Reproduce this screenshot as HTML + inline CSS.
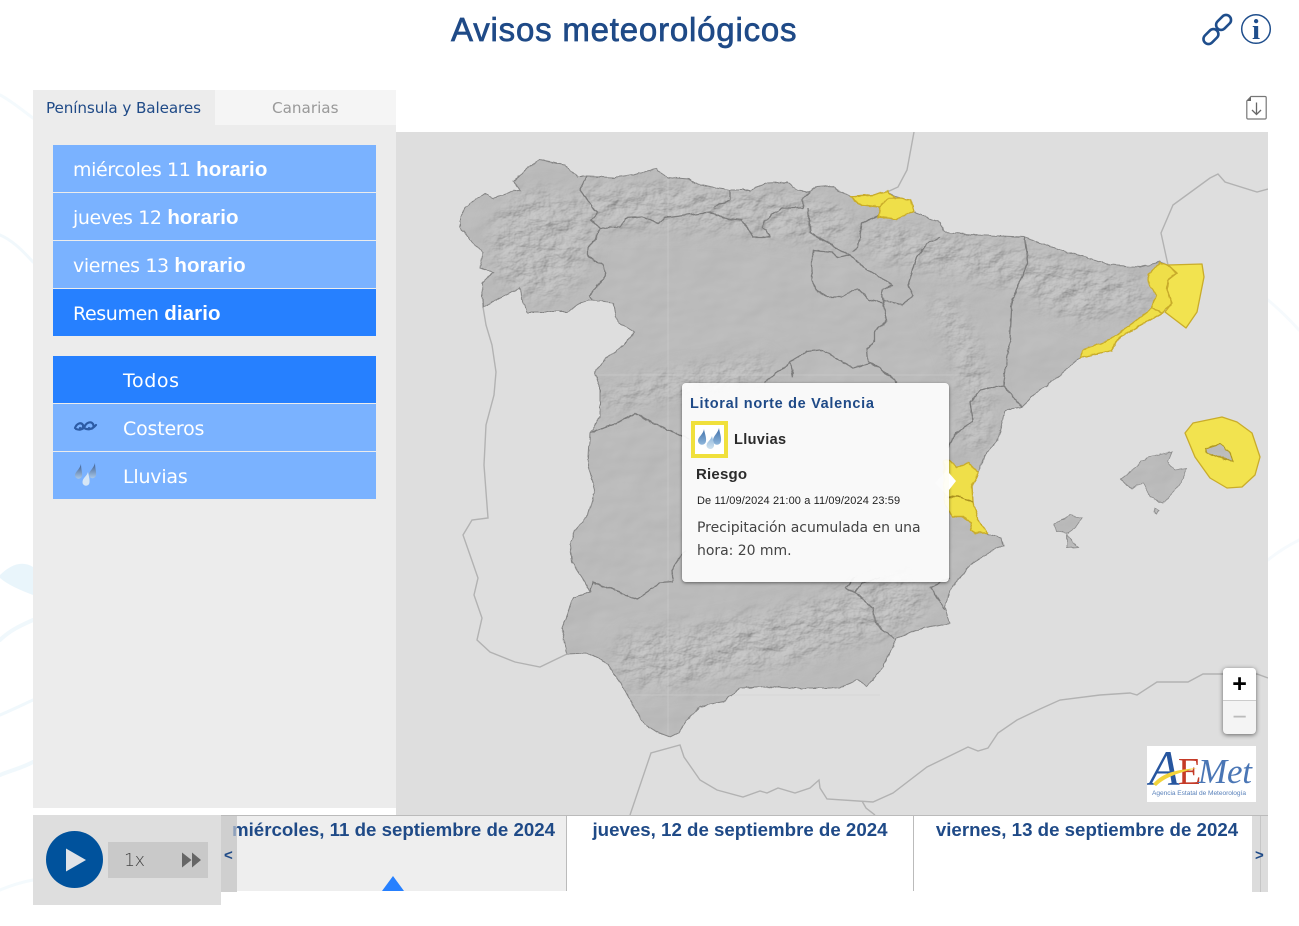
<!DOCTYPE html>
<html lang="es"><head><meta charset="utf-8"><title>Avisos meteorológicos</title>
<style>
html,body{margin:0;padding:0;width:1299px;height:926px;overflow:hidden;background:#fff}
body{position:relative;font-family:"DejaVu Sans","Liberation Sans",sans-serif;color:#333}
.a{position:absolute;white-space:nowrap}
.btn{position:absolute;left:53px;width:323px;height:47px;background:#7ab2ff;color:#fff;font-size:19px;line-height:47px;letter-spacing:-.38px}
.btn span{position:absolute;left:20px;top:1px;white-space:nowrap}
.btn b{font-family:"Liberation Sans",sans-serif;font-size:20.5px;letter-spacing:.1px}
.sel{background:#2680ff}
.t2 span{left:70px;top:2px;font-size:19px;letter-spacing:-.2px}
.day{position:absolute;top:816px;height:75px;font-family:"Liberation Sans",sans-serif;font-weight:bold;font-size:18.7px;color:#1f4a87;line-height:27px;text-align:center;white-space:nowrap;overflow:hidden}
</style></head><body>
<svg class="a" style="left:0;top:0;opacity:.55" width="1299" height="926" viewBox="0 0 1299 926" fill="none" stroke="#d6ebf7" stroke-linecap="round">
<path d="M0 235C12 240 22 250 33 262" stroke-width="3" opacity=".6"/>
<path d="M0 575C10 565 22 560 33 567L33 595C20 590 8 585 0 578Z" fill="#d8edf8" stroke="none"/>
<path d="M0 640C10 630 22 625 33 620" stroke-width="4" opacity=".7"/>
<path d="M0 715C12 710 22 705 33 700" stroke-width="3" opacity=".7"/>
<path d="M0 775C12 770 22 768 33 762" stroke-width="4" opacity=".7"/>
<path d="M0 890C12 885 22 882 33 880" stroke-width="3" opacity=".5"/>
<path d="M0 95C10 100 22 110 33 118" stroke-width="3" opacity=".5"/>
<path d="M1268 300C1280 310 1290 320 1299 330" stroke-width="3" opacity=".4"/>
<path d="M1268 560C1280 550 1290 545 1299 540" stroke-width="3" opacity=".4"/>
</svg>

<div class="a" style="left:451px;top:10px;font-family:'Liberation Sans',sans-serif;font-size:33px;line-height:40px;color:#1f4a87;letter-spacing:.8px;-webkit-text-stroke:.7px #1f4a87">Avisos meteorológicos</div>

<svg class="a" style="left:1200px;top:10px" width="75" height="40" viewBox="0 0 75 40">
<g fill="none" stroke="#1f4e8c" stroke-width="2.600">
<rect x="-10" y="-5" width="17" height="10" rx="5" transform="translate(12 25.500) rotate(-45)"/>
<rect x="-7" y="-5" width="17" height="10" rx="5" transform="translate(22.500 13.500) rotate(-45)"/>
</g>
<circle cx="56" cy="19" r="14.300" fill="#fff" stroke="#1f4e8c" stroke-width="1.500"/>
<text x="56" y="29" text-anchor="middle" font-family="Liberation Serif,serif" font-weight="bold" font-size="29" fill="#1f4e8c">i</text>
</svg>

<svg class="a" style="left:1245px;top:95px" width="23" height="26" viewBox="0 0 23 26">
<path d="M6 1.500H20a1.200 1.200 0 0 1 1.200 1.200V22.800a1.200 1.200 0 0 1-1.200 1.200H3a1.200 1.200 0 0 1-1.200-1.200V6Z" fill="#fff" stroke="#777" stroke-width="1.200"/>
<path d="M2 6L6 2V6Z" fill="#666"/>
<path d="M11.500 7.500V19M7 15l4.500 4.500L16 15" fill="none" stroke="#666" stroke-width="1.300"/>
</svg>

<!-- MAP -->
<svg class="a" style="left:396px;top:132px;background:#dedede" width="872" height="683" viewBox="396 132 872 683">
<defs>
<filter id="rough" filterUnits="userSpaceOnUse" x="396" y="132" width="872" height="683"><feTurbulence type="fractalNoise" baseFrequency=".11" numOctaves="3" seed="4"/><feDisplacementMap in="SourceGraphic" scale="3.500" xChannelSelector="R" yChannelSelector="G"/></filter>
<filter id="relief" filterUnits="userSpaceOnUse" x="396" y="132" width="872" height="683"><feTurbulence type="fractalNoise" baseFrequency=".02 .03" numOctaves="3" seed="11" result="n"/><feDiffuseLighting in="n" surfaceScale="1" diffuseConstant="1" lighting-color="#c9c9c9" result="l"><feDistantLight azimuth="225" elevation="58"/></feDiffuseLighting><feComposite in="l" in2="SourceAlpha" operator="in"/></filter>
<filter id="reliefS" filterUnits="userSpaceOnUse" x="396" y="132" width="872" height="683"><feTurbulence type="fractalNoise" baseFrequency=".05 .07" numOctaves="4" seed="7" result="n"/><feDiffuseLighting in="n" surfaceScale="2.800" diffuseConstant="1" lighting-color="#c9c9c9" result="l"><feDistantLight azimuth="225" elevation="58"/></feDiffuseLighting><feComposite in="l" in2="SourceAlpha" operator="in"/></filter>
<filter id="bl" filterUnits="userSpaceOnUse" x="396" y="132" width="872" height="683"><feGaussianBlur stdDeviation="10"/></filter>
<mask id="rm" maskUnits="userSpaceOnUse" x="396" y="132" width="872" height="683">
<g filter="url(#bl)" fill="none" stroke="#fff" stroke-linecap="round">
<path d="M600,205C680,205 760,205 830,225" stroke-width="45"/>
<path d="M880,240C960,260 1060,270 1130,295" stroke-width="40"/>
<ellipse cx="540" cy="245" rx="50" ry="55" fill="#fff" stroke="none"/>
<path d="M945,310C970,350 985,400 975,440" stroke-width="28"/>
<path d="M640,660C720,655 790,640 900,600" stroke-width="55"/>
<path d="M610,400C660,385 700,380 760,370" stroke-width="24"/>
<path d="M1040,290 1090,310" stroke-width="30"/>
</g></mask>
<path id="spain" d="M460,218 465,208 478,198 485,193 493,198 512,192 520,190 514,182 527,168 540,160 550,162 565,165 577,177 587,177 613,178 633,175 655,169 667,177 688,179 697,184 730,190 750,190 768,183 787,182 798,190 810,192 817,187 830,186 850,197 873,195 887,191 900,198 910,200 913,212 940,222 945,232 975,235 1025,237 1060,250 1090,258 1110,265 1140,267 1160,262 1168,265 1177,273 1168,280 1167,290 1172,303 1163,313 1147,322 1120,337 1112,350 1080,358 1060,375 1040,390 1022,407 1005,410 998,440 985,455 978,473 972,487 973,502 978,520 988,534 1001,538 1003,545 985,555 970,565 963,575 953,585 945,607 950,623 923,628 897,638 883,667 867,687 857,680 840,687 830,688 793,688 767,687 740,688 723,702 700,707 687,720 678,733 670,737 657,732 643,723 630,700 622,685 607,663 587,653 567,654 562,628 573,598 590,592 585,582 572,562 570,545 575,530 588,515 595,490 588,465 590,433 600,417 600,387 595,373 607,357 622,347 635,332 617,322 613,303 587,300 567,312 527,312 522,297 520,288 483,307 482,283 493,272 480,268 483,253 468,237 460,227Z"/>
<path id="isl" d="M1120,479 1132,470 1148,457 1172,452 1168,462 1175,470 1187,468 1180,485 1163,503 1150,497 1143,483 1132,488ZM1054,524 1070,515 1082,518 1075,528 1068,533 1056,531ZM1067,534 1071,541 1078,547 1067,548ZM1155,508 1159,510 1157,514 1154,512ZM1205,448 1220,444 1230,452 1233,462 1220,457 1207,453Z"/>
</defs>

<g fill="none" stroke="#b2b2b2" stroke-width="1.400">
<path d="M914,132 907,170 898,187 887,192"/>
<path d="M1168,265 1161,233 1173,205 1210,178 1218,174 1225,182 1257,192 1268,189"/>
<path d="M483,307 486,325 492,345 496,372 494,395 486,425 484,465 487,505 488,518 472,520 463,535 470,555 478,578 474,595 482,618 477,640 490,652 515,662 540,667 567,654"/>
<path d="M630,815 651,753 680,745 684,757 700,780 717,790 743,797 760,791 767,793 778,788 795,793 810,788 819,780 820,788 827,799 873,802 893,793 927,767 968,747 978,751 988,748 998,733 1017,720 1040,709 1060,700 1100,695 1130,693 1137,695 1157,682 1188,682 1203,674 1223,674 1257,674 1268,678"/>
<path d="M862,801 866,808 875,815"/>
</g>

<!-- sea zones -->
<g fill="#f2e34f" stroke="#c9ac2a" stroke-width="1.300" stroke-linejoin="round">
<path d="M1168,265 1202,264 1204,277 1197,312 1186,328 1165,312 1172,303 1167,290 1168,280 1177,273Z"/>
<path d="M1185,433 1193,423 1222,417 1237,422 1252,433 1260,457 1255,475 1242,487 1227,488 1210,478 1195,457Z"/>
</g>

<g filter="url(#relief)"><g filter="url(#rough)"><use href="#spain" fill="#000"/><use href="#isl" fill="#000"/></g></g>
<g mask="url(#rm)"><g filter="url(#reliefS)"><g filter="url(#rough)"><use href="#spain" fill="#000"/></g></g></g>

<g stroke="#d0d0d0" stroke-width="1" opacity=".5">
<path d="M668,177V735M595,375H960M625,695H880"/>
</g>

<g filter="url(#rough)">
<g fill="none" stroke="#7c7c7c" stroke-width="1.300" stroke-linejoin="round">
<path d="M587,177 580,190 593,208 598,212 591,220 600,228 595,240 588,247 588,257 603,265 605,275 597,287 590,295 592,300"/>
<path d="M600,228 620,227 625,218 642,217 658,223 665,218 710,212 723,218 742,220 753,237 770,237 762,228 765,220 782,208 803,208 802,200 810,192"/>
<path d="M730,190 730,200 713,207"/>
<path d="M808,208 810,233 828,243 840,250 850,255"/>
<path d="M812,255 813,250 832,252 838,258 850,255 863,267 880,277 893,285 882,290 883,303 870,300 857,288 843,297 830,297 818,292 812,280Z"/>
<path d="M880,215 862,223 858,247 852,252"/>
<path d="M940,238 927,243 917,257 908,285 913,295 903,305 883,300"/>
<path d="M883,303 887,320 875,332 875,342 867,348 868,362 885,372 897,382"/>
<path d="M765,382 790,362 807,352 823,350 853,368 872,363 897,382"/>
<path d="M790,362 793,377"/>
<path d="M590,433 617,423 635,413 653,423 670,430 690,440"/>
<path d="M1025,237 1028,262 1012,300 1010,340 1003,385 1022,407"/>
<path d="M1003,385 980,390 970,403 973,420 952,438 948,448"/>
<path d="M590,592 593,582 623,593 637,599 660,583 673,582 672,570 685,550"/>
<path d="M845,588 855,592 873,608 875,623 895,639"/>
<path d="M855,592 862,583 880,578"/>
<path d="M930,587 945,610"/>
<path d="M930,587 950,578"/>
<path d="M845,588 855,578"/>
</g>
<use href="#isl" fill="none" stroke="#8c8c8c" stroke-width=".8"/>
<path d="M1205,448 1220,444 1230,452 1233,462 1220,457 1207,453Z" fill="none" stroke="#b39a24" stroke-width="1.200"/>
<use href="#spain" fill="none" stroke="#858585" stroke-width="1"/>

<!-- land warning zones -->
<g fill="#efdf4a" stroke="#c9ac2a" stroke-width="1.400" stroke-linejoin="round">
<path d="M850,197 873,195 887,191 895,197 880,207 862,205Z"/>
<path d="M888,198 900,198 910,200 913,212 897,219 878,217 880,207Z"/>
<path d="M1160,263 1168,265 1177,273 1168,280 1167,290 1172,303 1163,313 1152,308 1156,295 1150,285 1148,274Z"/>
<path d="M1163,313 1147,322 1120,337 1112,350 1080,358 1083,350 1110,340 1130,325 1152,308Z"/>
<path d="M944,460 950,460 957,468 968,463 978,473 972,487 973,502 978,520 988,533 975,533 970,530 972,523 963,517 952,517 944,500Z"/>
<path d="M947,497 960,497 973,502" fill="none" stroke="#a98f1e"/>
</g>
</g>
</svg>

<!-- Map controls -->
<div class="a" style="left:1223px;top:668px;width:33px;height:66px;border-radius:4px;background:#f4f4f4;box-shadow:0 1px 5px rgba(0,0,0,.55);overflow:hidden">
<div style="height:32px;background:#fff;border-bottom:1px solid #ccc;color:#000;font:bold 25px/32px 'Liberation Sans',sans-serif;text-align:center">+</div>
<div style="color:#bbb;font:25px/32px 'Liberation Sans',sans-serif;text-align:center">−</div>
</div>

<svg class="a" style="left:1147px;top:746px;background:#fff" width="109" height="56" viewBox="0 0 109 56">
<text x="2" y="39" font-family="Liberation Serif,serif" font-style="italic" font-size="50" fill="#27569f">A</text>
<text x="31" y="38" font-family="Liberation Serif,serif" font-size="38" fill="#c53a27">E</text>
<text x="51" y="37" font-family="Liberation Serif,serif" font-style="italic" font-size="35" fill="#4a76b5" textLength="54">Met</text>
<path d="M6 38C16 26 30 24 50 22 32 27 20 30 9 40Z" fill="#f2d33a"/>
<text x="5" y="49" font-family="Liberation Sans,sans-serif" font-size="6.600" fill="#5a82bb" textLength="94">Agencia Estatal de Meteorología</text>
</svg>

<!-- Popup -->
<div class="a" style="left:682px;top:383px;width:267px;height:199px;border-radius:4px;background:rgba(255,255,255,.91);box-shadow:0 1px 3px rgba(0,0,0,.5)"></div>
<svg class="a" style="left:930px;top:465px" width="30" height="35" viewBox="0 0 30 35"><path d="M19 8L26 16 19 25Z" fill="#fff"/><path d="M19 3 5 18 19 32Z" fill="#fff" opacity=".4"/></svg>
<div class="a" style="left:690px;top:395px;font:bold 14.500px/18px 'Liberation Sans',sans-serif;letter-spacing:.68px;color:#1f4a87">Litoral norte de Valencia</div>
<div class="a" style="left:691px;top:421px;width:29px;height:29px;border:4px solid #f0e03c;background:#fff"></div>
<svg class="a" style="left:695px;top:425px" width="30" height="30" viewBox="0 0 30 30">
<defs><linearGradient id="dr" x1="0" y1="0" x2="0" y2="1"><stop offset="0" stop-color="#3e6ea8"/><stop offset="1" stop-color="#8fb7dc"/></linearGradient>
<linearGradient id="dr2" x1="0" y1="0" x2="0" y2="1"><stop offset="0" stop-color="#8fb7dc"/><stop offset="1" stop-color="#cfe2ef"/></linearGradient></defs>
<path d="M9 4C8.500 9 3 12 3 15.500A4 4 0 0 0 11 16C11.500 12 9.500 8 9 4Z" fill="url(#dr)"/>
<path d="M24 3C23 8 18 11 18 15.500A4 4 0 0 0 26 16C26.500 12 24.500 7 24 3Z" fill="url(#dr)"/>
<path d="M17 11C16 15 11.500 17 11.500 20.500A3.800 3.800 0 0 0 19 21C19.500 18 17.500 14 17 11Z" fill="url(#dr2)"/>
</svg>
<div class="a" style="left:734px;top:431px;font:bold 14.500px/18px 'Liberation Sans',sans-serif;letter-spacing:.35px;color:#2b2b2b">Lluvias</div>
<div class="a" style="left:696px;top:466px;font:bold 15px/18px 'Liberation Sans',sans-serif;letter-spacing:.2px;color:#2b2b2b">Riesgo</div>
<div class="a" style="left:697px;top:494px;font:11px/14px 'Liberation Sans',sans-serif;letter-spacing:.11px;color:#222">De 11/09/2024 21:00 a 11/09/2024 23:59</div>
<div class="a" style="left:697px;top:517px;font-size:14px;line-height:23px;color:#444;letter-spacing:-.03px">Precipitación acumulada en una<br>hora: 20 mm.</div>

<!-- Sidebar -->
<div class="a" style="left:33px;top:90px;width:363px;height:718px;background:#ececec"></div>
<div class="a" style="left:215px;top:90px;width:181px;height:35px;background:#f5f5f5"></div>
<div class="a" style="left:46px;top:98px;font-size:15.200px;line-height:20px;color:#1f4a87;letter-spacing:-.1px">Península y Baleares</div>
<div class="a" style="left:272px;top:98px;font-size:15.200px;line-height:20px;color:#999">Canarias</div>

<div class="btn" style="top:145px"><span>miércoles 11 <b>horario</b></span></div>
<div class="btn" style="top:193px"><span>jueves 12 <b>horario</b></span></div>
<div class="btn" style="top:241px"><span>viernes 13 <b>horario</b></span></div>
<div class="btn sel" style="top:289px"><span>Resumen <b>diario</b></span></div>

<div class="btn sel t2" style="top:356px"><span style="letter-spacing:.6px">Todos</span></div>
<div class="btn t2" style="top:404px"><span>Costeros</span></div>
<div class="btn t2" style="top:452px"><span>Lluvias</span></div>

<svg class="a" style="left:73px;top:418px" width="26" height="16" viewBox="0 0 26 16"><path d="M2 10C4 5 8 4 10 7 11 10 8 12 7 10M11 10C13 4 18 3 20 6 22 10 18 12 16 10 M3 11C6 12 8 12 11 10C14 12 19 12 23 7" fill="none" stroke="#2c5ba5" stroke-width="2.200" stroke-linecap="round"/></svg>
<svg class="a" style="left:73px;top:463px" width="26" height="26" viewBox="0 0 26 26">
<defs><linearGradient id="g3" x1="0" y1="0" x2="0" y2="1"><stop offset="0" stop-color="#3a5a8c"/><stop offset="1" stop-color="#a9c8e8"/></linearGradient></defs>
<path d="M8 1C7 6 2 9 2 12A3.500 3.500 0 0 0 9 12.500C9.500 9 8 6 8 1Z" fill="url(#g3)"/>
<path d="M22 0C21 5 16 8 16 11.500A3.500 3.500 0 0 0 23 12C23.500 8 22 5 22 0Z" fill="url(#g3)"/>
<path d="M15 9C14 13 9.500 15 9.500 19A3.500 3.500 0 0 0 16.500 19.500C17 16 15.500 12 15 9Z" fill="#d6e6f6"/>
</svg>

<!-- Player -->
<div class="a" style="left:33px;top:815px;width:188px;height:90px;background:#dedede"></div>
<div class="a" style="left:46px;top:831px;width:57px;height:57px;border-radius:50%;background:#00529c"></div>
<svg class="a" style="left:60px;top:845px" width="30" height="30" viewBox="0 0 30 30"><path d="M6 3.500L26 15 6 26.500Z" fill="#dfe3e8"/></svg>
<div class="a" style="left:108px;top:842px;width:100px;height:36px;background:#c9c9c9"></div>
<div class="a" style="left:124px;top:849px;font-size:17.500px;line-height:24px;color:#444;font-weight:300;letter-spacing:-.5px">1x</div>
<svg class="a" style="left:181px;top:851px" width="21" height="18" viewBox="0 0 21 18"><path d="M1 1.500L10.500 9 1 16.500ZM11 1.500L20 9 11 16.500Z" fill="#666"/></svg>

<!-- Timeline -->
<div class="a" style="left:221px;top:815px;width:1047px;height:1px;background:#bbb"></div>
<div class="a" style="left:237px;top:816px;width:329px;height:75px;background:#eee"></div>
<div class="day" style="left:232px;width:334px;text-align:left">miércoles, 11 de septiembre de 2024</div>
<div class="a" style="left:221px;top:816px;width:16px;height:76px;background:#cfcfcf"></div>
<div class="day" style="left:232px;width:5px;text-align:left;background:#cfcfcf;color:#8ea0bb;height:26px">m</div>
<div class="a" style="left:566px;top:816px;width:1px;height:75px;background:#bbb"></div>
<div class="day" style="left:567px;width:346px">jueves, 12 de septiembre de 2024</div>
<div class="a" style="left:913px;top:816px;width:1px;height:75px;background:#bbb"></div>
<div class="day" style="left:914px;width:346px">viernes, 13 de septiembre de 2024</div>
<div class="a" style="left:1252px;top:816px;width:16px;height:76px;background:#dcdcdc"></div>
<div class="a" style="left:1260px;top:816px;width:1px;height:76px;background:#c6c6c6"></div>
<div class="a" style="left:224px;top:846px;font:bold 15px/20px 'Liberation Sans',sans-serif;color:#1f4a87">&lt;</div>
<div class="a" style="left:1255px;top:846px;font:bold 15px/20px 'Liberation Sans',sans-serif;color:#1f4a87">&gt;</div>
<svg class="a" style="left:381px;top:876px" width="24" height="15" viewBox="0 0 24 15"><path d="M12 0L23 15H1Z" fill="#2680ff"/></svg>
</body></html>
